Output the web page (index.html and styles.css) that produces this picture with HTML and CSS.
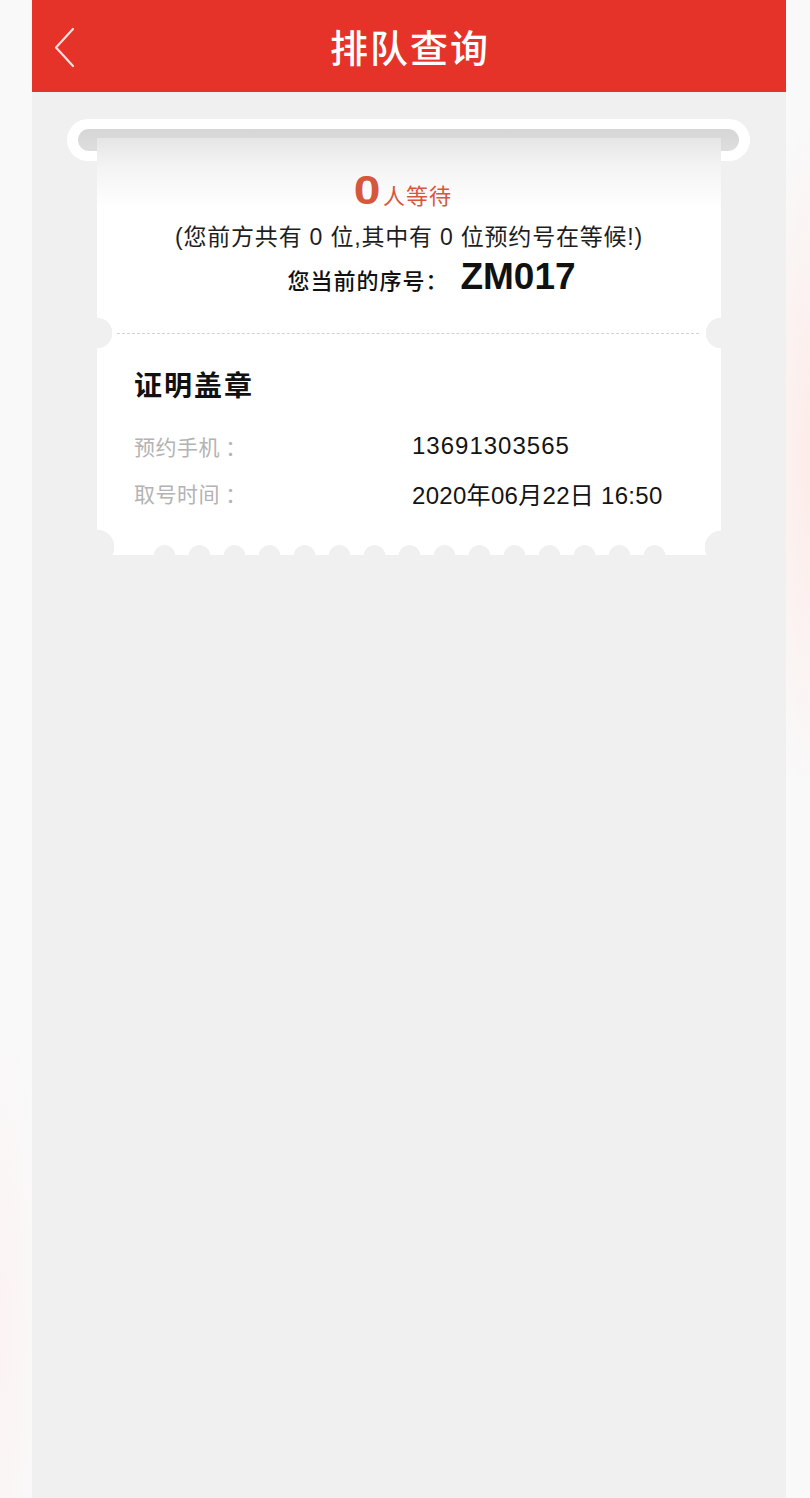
FILE: index.html
```html
<!DOCTYPE html>
<html lang="zh-CN">
<head>
<meta charset="utf-8">
<title>排队查询</title>
<link rel="stylesheet" href="styles.css">
</head>
<body>
<div class="app">
  <header class="topbar">
    <div class="topbar-left">
      <svg class="back" width="22" height="42" viewBox="0 0 22 42" aria-hidden="true">
        <polyline points="19,2 2,20.5 19,39" fill="none" stroke="#f7e3df" stroke-width="2.2" stroke-linecap="round" stroke-linejoin="round"/>
      </svg>
    </div>
    <h1 class="title">排队查询</h1>
    <div class="topbar-right"></div>
  </header>
  <main class="content">
    <div class="slot"><div class="slot-bar"></div></div>
    <section class="ticket">
      <div class="ticket-top">
        <p class="wait"><span class="wait-num">0</span><span class="wait-text">人等待</span></p>
        <p class="ahead">(您前方共有 0 位,其中有 0 位预约号在等候!)</p>
        <p class="serial"><span class="serial-label">您当前的序号：</span><span class="serial-no">ZM017</span></p>
      </div>
      <div class="ticket-bottom">
        <div class="divider"></div>
        <h2 class="service">证明盖章</h2>
        <div class="row"><span class="label">预约手机 ：</span><span class="value value-phone">13691303565</span></div>
        <div class="row"><span class="label">取号时间 ：</span><span class="value">2020年06月22日 16:50</span></div>
        <div class="scallops"></div>
      </div>
    </section>
  </main>
</div>
</body>
</html>
```

FILE: styles.css
```css
html, body {
  margin: 0;
  padding: 0;
}

body {
  font-family: "Liberation Sans", "Noto Sans CJK SC", sans-serif;
  background:
    radial-gradient(ellipse 50px 340px at 100% 460px, #fdebe8 0%, rgba(253, 235, 232, 0) 100%),
    radial-gradient(ellipse 45px 320px at 0 1330px, #fcf3f3 0%, rgba(252, 243, 243, 0) 100%),
    #f9f9f9;
}

.app {
  width: 754px;
  margin-left: 32px;
  min-height: 1498px;
  background: #f0f0f0;
}

/* ---------- header ---------- */
.topbar {
  height: 92px;
  background: #e6332a;
  display: grid;
  grid-template-columns: 1fr auto 1fr;
  align-items: center;
}

.topbar-left {
  padding-left: 22px;
  display: flex;
  align-items: center;
}

.back {
  display: block;
  margin-top: 4px;
}

.title {
  margin: 0;
  color: #ffffff;
  font-family: "Noto Sans CJK SC", sans-serif;
  font-size: 38px;
  font-weight: 500;
  letter-spacing: 2px;
  line-height: 92px;
  padding-left: 2px;
}

/* ---------- content ---------- */
.content {
  padding-top: 27px;
}

.slot {
  margin: 0 36px 0 35px;
  height: 42px;
  box-sizing: border-box;
  padding: 10px 11px;
  background: #ffffff;
  border-radius: 21px;
}

.slot-bar {
  height: 22px;
  border-radius: 11px;
  background: linear-gradient(#d6d6d6, #dedede);
}

.ticket {
  position: relative;
  z-index: 1;
  width: 624px;
  margin: -23px 0 0 65px;
}

.ticket-top {
  height: 195px;
  box-sizing: border-box;
  padding-top: 30px;
  text-align: center;
  background:
    radial-gradient(circle at 0 100%, #f0f0f0 15px, rgba(240, 240, 240, 0) 15.6px),
    radial-gradient(circle at 100% 100%, #f0f0f0 15px, rgba(240, 240, 240, 0) 15.6px),
    linear-gradient(#e5e5e5 0px, #f4f4f4 30px, #ffffff 70px);
}

.wait {
  margin: 0;
  line-height: 44px;
  color: #d5573c;
  padding-right: 10px;
}

.wait-num {
  display: inline-block;
  font-size: 40px;
  font-weight: 700;
  transform: scaleX(1.2);
  margin: 0 5px 0 0;
}

.wait-text {
  font-family: "Noto Sans CJK SC", sans-serif;
  font-size: 22px;
  letter-spacing: 1px;
}

.ahead {
  margin: 0;
  line-height: 32px;
  font-size: 23px;
  letter-spacing: 0.8px;
  color: #1e1e1e;
}

.serial {
  margin: 2px 0 0;
  line-height: 44px;
  color: #111111;
  padding-left: 45px;
}

.serial-label {
  font-family: "Noto Sans CJK SC", sans-serif;
  font-size: 22px;
  font-weight: 500;
  letter-spacing: 1px;
}

.serial-no {
  font-size: 37px;
  font-weight: 700;
  margin-left: 12px;
}

.ticket-bottom {
  background:
    radial-gradient(circle at 0 0, #f0f0f0 15px, rgba(240, 240, 240, 0) 15.6px),
    radial-gradient(circle at 100% 0, #f0f0f0 15px, rgba(240, 240, 240, 0) 15.6px),
    radial-gradient(circle at 0 calc(100% - 8px), #f0f0f0 17px, rgba(240, 240, 240, 0) 17.6px),
    radial-gradient(circle at 100% calc(100% - 8px), #f0f0f0 16px, rgba(240, 240, 240, 0) 16.6px),
    #ffffff;
}

.divider {
  margin: 0 22px 0 20px;
  border-top: 1px dashed #d2d2d2;
}

.service {
  margin: 0;
  padding: 30px 0 0 37px;
  line-height: 40px;
  font-family: "Noto Sans CJK SC", sans-serif;
  font-size: 28px;
  font-weight: 700;
  letter-spacing: 2px;
  color: #111111;
}

.row {
  display: flex;
  align-items: center;
  padding-left: 37px;
  height: 34px;
  margin-top: 25px;
}

.row + .row {
  margin-top: 13px;
}

.label {
  width: 278px;
  flex: none;
  font-family: "Noto Sans CJK SC", sans-serif;
  font-size: 21px;
  color: #b3b3b3;
  letter-spacing: 0.5px;
}

.value {
  font-size: 24px;
  color: #141414;
  letter-spacing: 0.3px;
}

.value-phone {
  letter-spacing: 1px;
}

.scallops {
  margin: 33px 0 0 50px;
  width: 525px;
  height: 12px;
  background: radial-gradient(circle at 17.5px 13px, #f0f0f0 10.5px, rgba(240, 240, 240, 0) 11.2px);
  background-size: 35px 12px;
  background-repeat: repeat-x;
}
```
